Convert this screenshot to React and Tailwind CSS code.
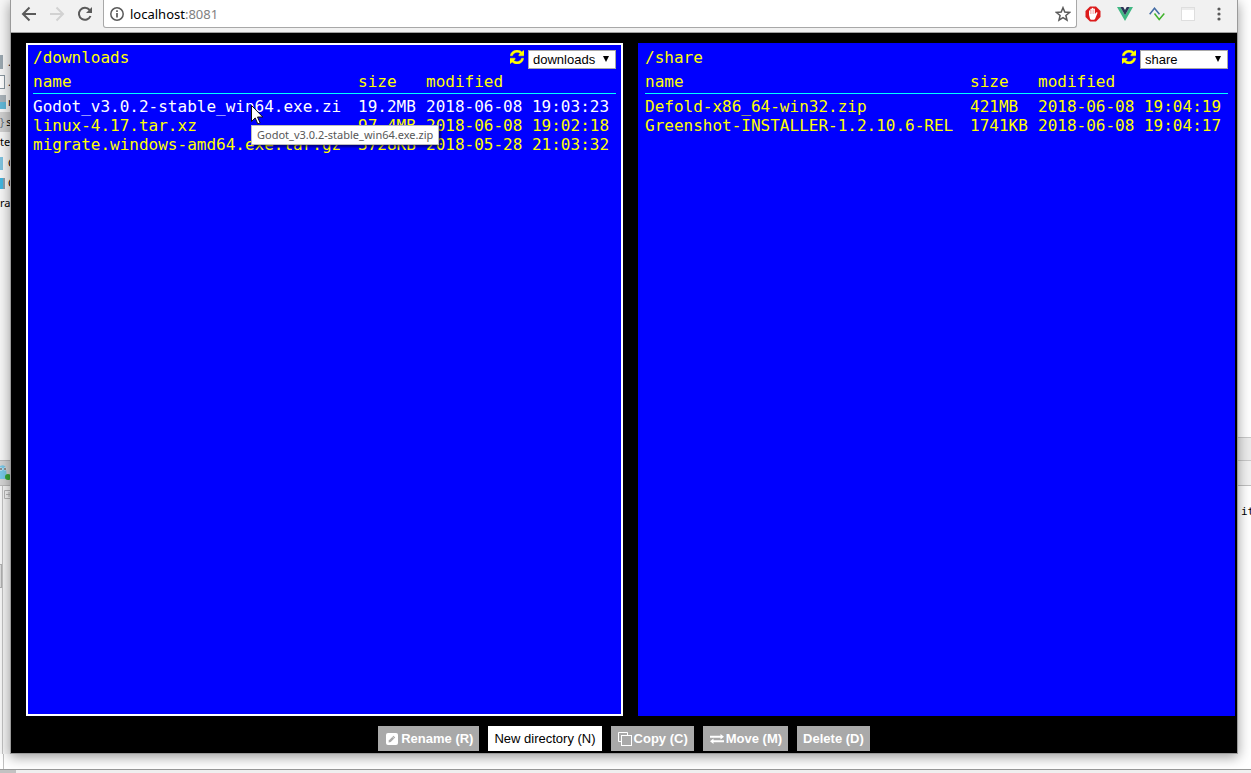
import React from "react";

const downloads = [
  { name: "Godot_v3.0.2-stable_win64.exe.zip", short: "Godot_v3.0.2-stable_win64.exe.zi", size: "19.2MB", modified: "2018-06-08 19:03:23", active: true },
  { name: "linux-4.17.tar.xz", short: "linux-4.17.tar.xz", size: "97.4MB", modified: "2018-06-08 19:02:18" },
  { name: "migrate.windows-amd64.exe.tar.gz", short: "migrate.windows-amd64.exe.tar.gz", size: "3728KB", modified: "2018-05-28 21:03:32" },
];

const share = [
  { name: "Defold-x86_64-win32.zip", short: "Defold-x86_64-win32.zip", size: "421MB", modified: "2018-06-08 19:04:19" },
  { name: "Greenshot-INSTALLER-1.2.10.6-REL", short: "Greenshot-INSTALLER-1.2.10.6-REL", size: "1741KB", modified: "2018-06-08 19:04:17" },
];

function RefreshIcon() {
  return (
    <svg width="14" height="14" viewBox="0 0 1536 1536" fill="currentColor" stroke="currentColor" strokeWidth="50" aria-hidden="true">
      <path d="M1511 928q0 5-1 7-64 268-268 434.500T764 1536q-146 0-282.500-55T238 1324l-129 129q-19 19-45 19t-45-19-19-45V960q0-26 19-45t45-19h448q26 0 45 19t19 45-19 45l-137 137q71 66 161 102t187 36q134 0 250-65t186-179q11-17 53-117 8-23 30-23h192q13 0 22.500 9.500t9.500 22.500zm25-800v448q0 26-19 45t-45 19h-448q-26 0-45-19t-19-45 19-45l138-138Q969 256 768 256q-134 0-250 65T332 500q-11 17-53 117-8 23-30 23H50q-13 0-22.500-9.500T18 608v-7q65-268 270-434.500T768 0q146 0 284 55.500T1297 212l130-129q19-19 45-19t45 19 19 45z" />
    </svg>
  );
}

function Tooltip({ text }) {
  return (
    <span role="tooltip" className="absolute left-[218px] top-7 z-10 whitespace-nowrap border border-[#bdbdbd] bg-white px-[5px] font-['Noto_Sans',sans-serif] text-[11px] leading-[18px] text-[#575757] shadow-[2px_2px_2px_rgba(0,0,0,0.5)]">
      {text}
    </span>
  );
}

function Cursor() {
  return (
    <svg className="absolute left-[218px] top-[8px] z-20" width="13" height="20" viewBox="0 0 13 20" aria-hidden="true">
      <path d="M.5.5v16l3.700-3.600 2.600 6 2.300-1-2.600-5.900h5.300z" fill="white" stroke="#111" strokeWidth="1" />
    </svg>
  );
}

function Panel({ id, path, option, files, focused }) {
  return (
    <section className={`flex min-w-0 flex-col border-2 bg-[#0000ff] px-[5px] pt-[3px] ${focused ? "border-white" : "border-[#0000ff]"}`}>
      <header className="flex h-[24px] items-start justify-between">
        <h2>{path}</h2>
        <div className="flex items-start gap-1 pt-[2px]">
          <button type="button" aria-label={`Refresh ${path}`} className="text-[#ffff00]"><RefreshIcon /></button>
          <div className="relative">
            <label htmlFor={id} className="sr-only">Root directory</label>
            <select id={id} defaultValue={option} className="block h-[19px] w-[88px] appearance-none border border-[#a9a9a9] bg-white pl-1 font-['Liberation_Sans',sans-serif] text-[13px] leading-4 text-black">
              <option>downloads</option>
              <option>share</option>
            </select>
            <svg className="pointer-events-none absolute right-[7px] top-[6px]" width="6" height="6" viewBox="0 0 6 6" aria-hidden="true"><path d="M0 0h6L3 6z" fill="black" /></svg>
          </div>
        </div>
      </header>
      <table className="w-full table-fixed border-separate border-spacing-0 text-left">
        <colgroup>
          <col />
          <col className="w-[68px]" />
          <col className="w-[190px]" />
        </colgroup>
        <thead>
          <tr>
            <th className="h-[22px] border-b border-[#00ffff] p-0 align-top font-normal">name</th>
            <th className="border-b border-[#00ffff] p-0 align-top font-normal">size</th>
            <th className="border-b border-[#00ffff] p-0 align-top font-normal">modified</th>
          </tr>
        </thead>
        <tbody>
          <tr className="h-[3px]" aria-hidden="true"><td className="p-0" colSpan={3}></td></tr>
          {files.map((file) => (
            <tr key={file.name} className={file.active ? "text-white" : ""}>
              <td className="relative whitespace-nowrap p-0">
                {file.short}
                {file.active && <><Tooltip text={file.name} /><Cursor /></>}
              </td>
              <td className="whitespace-nowrap p-0">{file.size}</td>
              <td className="whitespace-nowrap p-0">{file.modified}</td>
            </tr>
          ))}
        </tbody>
      </table>
    </section>
  );
}

function BrowserBar() {
  return (
    <header className="flex h-[33px] items-start border-b border-[#a0a0a0] bg-[#f1f1f1] pr-[10px] text-[#5a5a5a]">
      <div className="flex h-7 items-center gap-3 pl-[10px] pr-[10px]">
        <button type="button" aria-label="Back">
          <svg width="16" height="16" viewBox="0 0 16 16" fill="none" stroke="currentColor" strokeWidth="2"><path d="M15 8H2M8.500 1.500 2 8l6.500 6.500" /></svg>
        </button>
        <button type="button" aria-label="Forward" className="text-[#d2d2d2]">
          <svg width="16" height="16" viewBox="0 0 16 16" fill="none" stroke="currentColor" strokeWidth="2"><path d="M1 8h13M7.500 1.500 14 8l-6.500 6.500" /></svg>
        </button>
        <button type="button" aria-label="Reload">
          <svg width="16" height="16" viewBox="0 0 16 16" fill="none" stroke="currentColor" strokeWidth="2"><path d="M13.500 10A6 6 0 1 1 12.600 4" /><path d="M15 1v6H9z" fill="currentColor" stroke="none" /></svg>
        </button>
      </div>
      <div className="flex h-7 min-w-0 flex-1 items-center rounded-b-[3px] border border-t-0 border-[#a8a8a8] bg-white px-[5px] pl-[6px]">
        <svg width="14" height="14" viewBox="0 0 14 14" fill="none" stroke="currentColor" strokeWidth="1.500" aria-hidden="true"><circle cx="7" cy="7" r="6.200" /><path d="M7 6v4.500M7 3.300v1.600" strokeWidth="1.700" /></svg>
        <a href="#" className="min-w-0 flex-1 pl-[6px] font-['Noto_Sans',sans-serif] text-[13px] leading-5 text-black">localhost<span className="text-[#808080]">:8081</span></a>
        <button type="button" aria-label="Bookmark">
          <svg width="16" height="16" viewBox="0 0 16 16" fill="none" stroke="currentColor" strokeWidth="1.500"><path d="m8 1.700 1.800 4.400 4.700.4-3.600 3 1.100 4.600L8 11.600l-4 2.500 1.100-4.600-3.600-3 4.700-.4z" /></svg>
        </button>
      </div>
      <div className="flex h-7 items-center gap-4 pl-[8px]">
        <button type="button" aria-label="Ad blocker">
          <svg width="16" height="16" viewBox="0 0 16 16"><path d="M5 .5h6L15.500 5v6L11 15.500H5L.5 11V5z" fill="#dc1b1b" /><path d="M4 9V4.800q.7-.9 1.400 0V3q.8-.9 1.500 0V2.200q.8-.8 1.500 0V3q.8-.8 1.500 0v5l1.500-1.800q1.300-.3 1.100.8L10 13q-.4.700-1.200.7H6.300q-.8 0-1.200-.8z" fill="white" /><path d="M5.450 4.500V8M6.950 3.500V8M8.450 3.500V8" stroke="#dc1b1b" strokeWidth=".3" /></svg>
        </button>
        <button type="button" aria-label="Vue tools">
          <svg width="16" height="14" viewBox="0 0 16 14"><path d="M0 0h3.300L8 8.200 12.700 0H16L8 14z" fill="#41b883" /><path d="M3.300 0h3L8 3l1.700-3h3L8 8.200z" fill="#2c3658" /></svg>
        </button>
        <button type="button" aria-label="Connection">
          <svg width="16" height="14" viewBox="0 0 16 14" fill="none" strokeWidth="1.500"><path d="M.7 7.300 5.500 1.300l5 6" stroke="#426ba5" /><path d="m5.500 6.500 4.700 6 5.100-6" stroke="#40b32b" /></svg>
        </button>
        <button type="button" aria-label="Page">
          <svg width="14" height="14" viewBox="0 0 14 14"><rect x=".5" y=".5" width="13" height="13" fill="white" stroke="#dedede" /><path d="M1 2h12" stroke="#e6e6e6" strokeWidth="1.500" /></svg>
        </button>
        <button type="button" aria-label="Menu">
          <svg width="16" height="16" viewBox="0 0 16 16" fill="currentColor"><circle cx="8" cy="3" r="1.600" /><circle cx="8" cy="8" r="1.600" /><circle cx="8" cy="13" r="1.600" /></svg>
        </button>
      </div>
    </header>
  );
}

function RenameIcon() {
  return <svg width="14" height="12" viewBox="-1 0 14 12" aria-hidden="true"><rect width="12" height="12" rx="2" fill="white" /><path d="m2.500 9.500.5-2.200L7.500 2.800l1.700 1.700L4.700 9z" fill="#a9a9a9" /><path d="m6.500 3.800 1.700 1.700" stroke="white" strokeWidth=".6" /></svg>;
}

function CopyIcon() {
  return <svg width="14" height="14" viewBox="0 0 14 14" fill="none" stroke="white" aria-hidden="true"><path d="M3.500 9.500h-3v-9h9v3" /><rect x="3.500" y="3.500" width="10" height="10" /></svg>;
}

function MoveIcon() {
  return <svg width="14" height="10" viewBox="0 0 14 10" fill="white" aria-hidden="true"><path d="M0 1.800h10.500V0L14 2.800l-3.500 2.700V3.700H0zM14 6.300H3.500V4.500L0 7.200 3.500 10V8.200H14z" /></svg>;
}

function Action({ icon, children, enabled }) {
  return (
    <button type="button" disabled={!enabled} className={`flex h-[25px] items-center gap-[2px] whitespace-nowrap ${icon ? "pl-[7px] pr-[6px]" : "px-[6px]"} ${enabled ? "bg-white text-black" : "bg-[#a9a9a9] font-bold text-white"}`}>
      {icon}{children}
    </button>
  );
}

function EditorEdge() {
  return (
    <aside aria-hidden="true" className="flex w-[10px] shrink-0 flex-col overflow-hidden bg-[#f7f7f7] font-['Noto_Sans',sans-serif] text-[11px] text-black">
      <div className="h-[52px]"></div>
      <div className="flex h-5 items-center gap-[5px]"><i className="h-[14px] w-[3px] shrink-0 bg-[#9aa7b0]"></i>.</div>
      <div className="flex h-5 items-center gap-[3px]"><i className="h-[14px] w-[5px] shrink-0 border border-l-0 border-[#8a97a0] bg-white"></i>.</div>
      <div className="flex h-5 items-center gap-[2px]"><i className="h-[14px] w-[6px] shrink-0 border-b-[7px] border-[#62b8d8] bg-[#aab4bb]"></i>m</div>
      <div className="flex h-5 items-center gap-[2px] bg-[#d0d0d0]"><i className="not-italic text-[#65727b]">{"}"}</i>s</div>
      <div className="h-[21px] leading-5">ten</div>
      <div className="flex h-5 items-center gap-[5px]"><i className="h-[13px] w-[3px] shrink-0 bg-[#7fc3df]"></i>C</div>
      <div className="flex h-5 items-center gap-[3px]"><i className="h-[11px] w-[5px] shrink-0 border-r-2 border-[#8ba0ad] bg-[#40b6e0]"></i>C</div>
      <div className="h-5 leading-5">rar</div>
      <div className="min-h-0 flex-1"></div>
      <div className="flex h-[26px] items-center border-y border-[#bababa] bg-[#d4d4d4]">
        <svg width="10" height="18" viewBox="0 0 10 18"><path d="M0 2q5-2 6 2l1 11H0z" fill="#78c8e8" /><circle cx="1" cy="5" r="1.600" fill="white" /><circle cx="5" cy="5" r="1.400" fill="white" /><path d="M1 4v2M5 4v2" stroke="#222" /><circle cx="8" cy="13" r="3" fill="#38a936" /></svg>
      </div>
      <div className="flex h-[268px]">
        <div className="w-[3px] pt-[78px]"><div className="h-6 w-[2px] border-y border-r border-[#b0b0b0] bg-[#dcdcdc]"></div></div>
        <div className="flex-1 border-l border-[#c2c2c2] bg-[#f5f5f5] pl-px pt-1">
          <svg width="8" height="9" viewBox="0 0 8 9" fill="none" stroke="#b8b8b8"><path d="M8 .5H.5v8H8M2 4.500h6M5 2v5" /></svg>
        </div>
      </div>
    </aside>
  );
}

export default function App() {
  return (
    <div className="flex min-h-screen flex-col bg-white">
      <div className="flex flex-1">
        <EditorEdge />
        <main className="z-10 flex min-w-0 flex-1 flex-col border-x border-b border-[#9a9a9a] bg-black shadow-[0_3px_12px_rgba(0,0,0,0.4)]">
          <BrowserBar />
          <div className="grid flex-1 grid-cols-2 gap-[15px] pl-[15px] pr-[2px] pt-[10px] font-['DejaVu_Sans_Mono',monospace] text-[16px] leading-[19px] text-[#ffff00]">
            <Panel id="left-root" path="/downloads" option="downloads" files={downloads} focused />
            <Panel id="right-root" path="/share" option="share" files={share} />
          </div>
          <footer className="flex justify-center gap-[9px] pb-[2px] pt-[10px] font-['Liberation_Sans',sans-serif] text-[13px] leading-4">
            <Action icon={<RenameIcon />}>Rename (R)</Action>
            <Action enabled>New directory (N)</Action>
            <Action icon={<CopyIcon />}>Copy (C)</Action>
            <Action icon={<MoveIcon />}>Move (M)</Action>
            <Action>Delete (D)</Action>
          </footer>
        </main>
        <aside className="flex w-[13px] shrink-0 flex-col overflow-hidden">
          <div className="flex-1"></div>
          <div className="h-6 border-y border-[#c9c9c9] bg-[#ececec]"></div>
          <div className="h-[25px] border-b border-[#c0c0c0] bg-[#f2f2f2]"></div>
          <div className="h-[268px] whitespace-nowrap pl-[3px] pt-4 font-['DejaVu_Sans_Mono',monospace] text-[11px] leading-5 text-black">it</div>
        </aside>
      </div>
      <div className="flex h-[19px] flex-col">
        <div className="ml-[3px] h-[15px] border-l border-[#c2c2c2]"></div>
        <div className="h-1 border-t border-[#999999] bg-[#f0f0f0]"><div className="h-[3px] w-4 bg-[#c2c2c2]"></div></div>
      </div>
    </div>
  );
}
